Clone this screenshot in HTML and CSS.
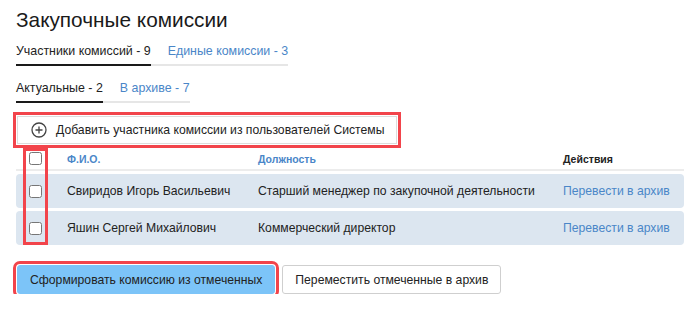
FILE: index.html
```html
<!DOCTYPE html>
<html lang="ru">
<head>
    <meta charset="UTF-8">
    <meta name="viewport" content="width=device-width, initial-scale=1.0">
    <title>Закупочные комиссии</title>
    <link rel="stylesheet" href="styles.css">
</head>
<body>
    <h1>Закупочные комиссии</h1>

    <div class="tabs tabs-main">
        <a class="tab active">Участники комиссий - 9</a>
        <a class="tab">Единые комиссии - 3</a>
    </div>

    <div class="tabs tabs-sub">
        <a class="tab active">Актуальные - 2</a>
        <a class="tab">В архиве - 7</a>
    </div>

    <button class="add-btn marked">
        <svg class="add-icon" width="16" height="16" viewBox="0 0 16 16">
            <circle cx="8" cy="8" r="7" fill="none" stroke="#444" stroke-width="1.3"/>
            <path d="M8 4.5v7M4.5 8h7" stroke="#444" stroke-width="1.3"/>
        </svg>
        Добавить участника комиссии из пользователей Системы
    </button>

    <div class="members">
        <div class="row head">
            <div class="cell"><input type="checkbox"></div>
            <div class="cell col-title">Ф.И.О.</div>
            <div class="cell col-title">Должность</div>
            <div class="cell col-title dark">Действия</div>
        </div>
        <div class="row item">
            <div class="cell"><input type="checkbox"></div>
            <div class="cell">Свиридов Игорь Васильевич</div>
            <div class="cell">Старший менеджер по закупочной деятельности</div>
            <div class="cell"><a class="link">Перевести в архив</a></div>
        </div>
        <div class="row item">
            <div class="cell"><input type="checkbox"></div>
            <div class="cell">Яшин Сергей Михайлович</div>
            <div class="cell">Коммерческий директор</div>
            <div class="cell"><a class="link">Перевести в архив</a></div>
        </div>
        <div class="check-mark"></div>
    </div>

    <div class="actions">
        <button class="btn btn-primary marked">Сформировать комиссию из отмеченных</button>
        <button class="btn">Переместить отмеченные в архив</button>
    </div>
</body>
</html>
```

FILE: styles.css
```css
* {
    margin: 0;
    padding: 0;
    box-sizing: border-box;
    font-family: "Liberation Sans", Arial, sans-serif;
}

body {
    background: #fff;
    color: #222;
    padding: 0 16px;
    font-size: 12.2px;
}

h1 {
    font-size: 20.8px;
    line-height: 26px;
    font-weight: normal;
    color: #1a1a1a;
    margin: 7px 0 0;
}

.tabs {
    display: flex;
    width: max-content;
    gap: 17px;
    border-bottom: 2px solid #e6e6e6;
}

.tabs-main {
    margin-top: 9px;
}

.tabs-sub {
    margin-top: 13px;
}

.tab {
    display: block;
    font-size: 12.4px;
    line-height: 18px;
    padding-bottom: 4px;
    margin-bottom: -2px;
    border-bottom: 2px solid transparent;
    color: #4a86c8;
    cursor: pointer;
}

.tab.active {
    color: #222;
    border-bottom-color: #1a1a1a;
}

.marked {
    outline: 3px solid #f2444b;
    outline-offset: 1px;
}

.add-btn {
    display: flex;
    align-items: center;
    gap: 9px;
    margin: 13px 0 0 1px;
    width: 380px;
    padding: 4px 13px;
    border: 1px solid #dcdcdc;
    background: #fff;
    color: #222;
    font-size: 12.2px;
    line-height: 18px;
    white-space: nowrap;
    text-align: left;
    cursor: pointer;
}

.add-icon {
    flex: none;
}

.members {
    position: relative;
    margin-top: 4px;
}

.row {
    display: grid;
    grid-template-columns: 51px 191px 305px 1fr;
    align-items: center;
}

.row.head {
    height: 23px;
    border-bottom: 2px solid #ececec;
    margin-bottom: 3px;
}

.row.item {
    height: 34px;
    background: #dce6f0;
    border-radius: 4px;
    margin-bottom: 3px;
}

.cell:first-child {
    padding-left: 13px;
    display: flex;
    align-items: center;
}

.cell input {
    width: 13px;
    height: 13px;
    margin: 0;
}

.col-title {
    font-size: 10.5px;
    font-weight: bold;
    color: #4a86c8;
}

.col-title.dark {
    color: #222;
}

.link {
    color: #4a86c8;
    cursor: pointer;
}

.check-mark {
    position: absolute;
    left: 7px;
    top: 0;
    width: 25px;
    height: 97px;
    border: 3px solid #f2444b;
    pointer-events: none;
}

.actions {
    display: flex;
    align-items: center;
    gap: 7px;
    margin: 20px 0 0 1px;
}

.btn {
    height: 29px;
    padding: 0 12px;
    border: 1px solid #cfcfcf;
    border-radius: 3px;
    background: #fff;
    color: #222;
    font-size: 12.2px;
    cursor: pointer;
}

.btn-primary {
    background: #7cc4f8;
    border-color: #7cc4f8;
}
```
